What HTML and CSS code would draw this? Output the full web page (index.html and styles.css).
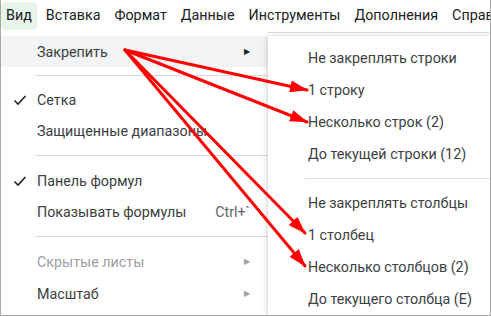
FILE: index.html
```html
<!DOCTYPE html>
<html lang="ru">
<head>
  <meta charset="UTF-8">
  <title>Вид — Закрепить</title>
  <link rel="stylesheet" href="styles.css">
</head>
<body>

  <div class="screen">
    <nav class="menubar">
      <span class="menubar-item active">Вид</span>
      <span class="menubar-item">Вставка</span>
      <span class="menubar-item">Формат</span>
      <span class="menubar-item">Данные</span>
      <span class="menubar-item">Инструменты</span>
      <span class="menubar-item">Дополнения</span>
      <span class="menubar-item">Справка</span>
    </nav>

    <div class="menus">
      <div class="menu menu-main">
        <div class="menu-row hover">
          <span class="menu-label">Закрепить</span>
          <span class="menu-arrow">&#9654;</span>
        </div>
        <div class="menu-sep first"></div>
        <div class="menu-row">
          <svg class="check" width="14" height="12" viewBox="0 0 14 12"><path d="M1.5 6.5 L5 10 L12.5 2" fill="none" stroke="#202124" stroke-width="1.6"/></svg>
          <span class="menu-label">Сетка</span>
        </div>
        <div class="menu-row">
          <span class="menu-label">Защищенные диапазоны</span>
        </div>
        <div class="menu-sep"></div>
        <div class="menu-row">
          <svg class="check" width="14" height="12" viewBox="0 0 14 12"><path d="M1.5 6.5 L5 10 L12.5 2" fill="none" stroke="#202124" stroke-width="1.6"/></svg>
          <span class="menu-label">Панель формул</span>
        </div>
        <div class="menu-row">
          <span class="menu-label">Показывать формулы</span>
          <span class="menu-shortcut">Ctrl+`</span>
        </div>
        <div class="menu-sep"></div>
        <div class="menu-row disabled">
          <span class="menu-label">Скрытые листы</span>
          <span class="menu-arrow">&#9654;</span>
        </div>
        <div class="menu-row last">
          <span class="menu-label">Масштаб</span>
          <span class="menu-arrow muted">&#9654;</span>
        </div>
      </div>

      <div class="menu menu-sub">
        <div class="menu-row">Не закреплять строки</div>
        <div class="menu-row">1 строку</div>
        <div class="menu-row">Несколько строк (2)</div>
        <div class="menu-row">До текущей строки (12)</div>
        <div class="menu-sep"></div>
        <div class="menu-row">Не закреплять столбцы</div>
        <div class="menu-row">1 столбец</div>
        <div class="menu-row">Несколько столбцов (2)</div>
        <div class="menu-row">До текущего столбца (E)</div>
      </div>
    </div>

    <!-- красные стрелки поверх меню -->
    <svg class="arrows" width="491" height="316" viewBox="0 0 491 316">
      <defs>
        <marker id="head" markerUnits="userSpaceOnUse" markerWidth="18" markerHeight="12" refX="17" refY="6" orient="auto">
          <path d="M0 0 L18 6 L0 12 Z" fill="#ff0000"/>
        </marker>
      </defs>
      <g stroke="#ff0000" stroke-width="3" stroke-linecap="round" marker-end="url(#head)">
        <line x1="124" y1="50" x2="306" y2="90"/>
        <line x1="124" y1="50" x2="306" y2="122"/>
        <line x1="124" y1="50" x2="304" y2="233"/>
        <line x1="124" y1="50" x2="304" y2="266"/>
      </g>
    </svg>
  </div>

</body>
</html>
```

FILE: styles.css
```css
* { box-sizing: border-box; }

body {
  margin: 0;
  background: #fff;
  font-family: Roboto, 'Noto Sans', sans-serif;
}

.screen {
  position: relative;
  width: 491px;
  height: 316px;
  overflow: hidden;
  border: 1px solid #a9a9a9;
  border-top: none;
  background: #fff;
}

.menubar {
  display: flex;
  gap: 4px;
  height: 33px;
  padding: 2px 0 0 0;
  border-bottom: 1px solid #dadce0;
  white-space: nowrap;
}

.menubar-item {
  height: 28px;
  line-height: 27px;
  padding: 0 5px;
  font-size: 14.3px;
  color: #202124;
  border-radius: 4px;
}

.menubar-item.active {
  background: #e6f4ea;
}

.menus {
  display: flex;
  margin-top: -3px;
}

.menu {
  background: #fff;
  font-size: 14.3px;
  color: #3c4043;
  white-space: nowrap;
}

.menu-main {
  width: 267px;
  flex: 0 0 267px;
  padding-top: 6px;
  border-radius: 0 4px 0 0;
}

.menu-sub {
  flex: 1;
  margin-top: 6px;
  padding-top: 6px;
  box-shadow: 0 1px 6px rgba(0, 0, 0, 0.25);
  position: relative;
}

.menu-main .menu-row {
  display: flex;
  align-items: center;
  height: 31px;
  padding: 0 18px 0 36px;
  position: relative;
}

.menu-main .menu-row.last {
  height: 33px;
}

.menu-main .menu-row.hover {
  background: #f1f3f4;
}

.menu-label {
  flex: 1;
}

.check {
  position: absolute;
  left: 12px;
  top: 10px;
}

.menu-arrow {
  font-size: 8px;
  color: #202124;
}

.menu-arrow.muted,
.disabled .menu-arrow {
  color: #9aa0a6;
}

.disabled .menu-label {
  color: #9aa0a6;
}

.menu-shortcut {
  color: #5f6368;
}

.menu-main .menu-sep {
  height: 1px;
  background: #dadce0;
  margin: 9px 0 9px 34px;
}

.menu-main .menu-sep.first {
  margin: 8px 0 8px 34px;
}

.menu-sub .menu-row {
  height: 32px;
  line-height: 32px;
  padding-left: 40px;
}

.menu-sub .menu-sep {
  height: 1px;
  background: #dadce0;
  margin: 8px 0 8px 37px;
}

.arrows {
  position: absolute;
  top: 0;
  left: 0;
  pointer-events: none;
}
```
